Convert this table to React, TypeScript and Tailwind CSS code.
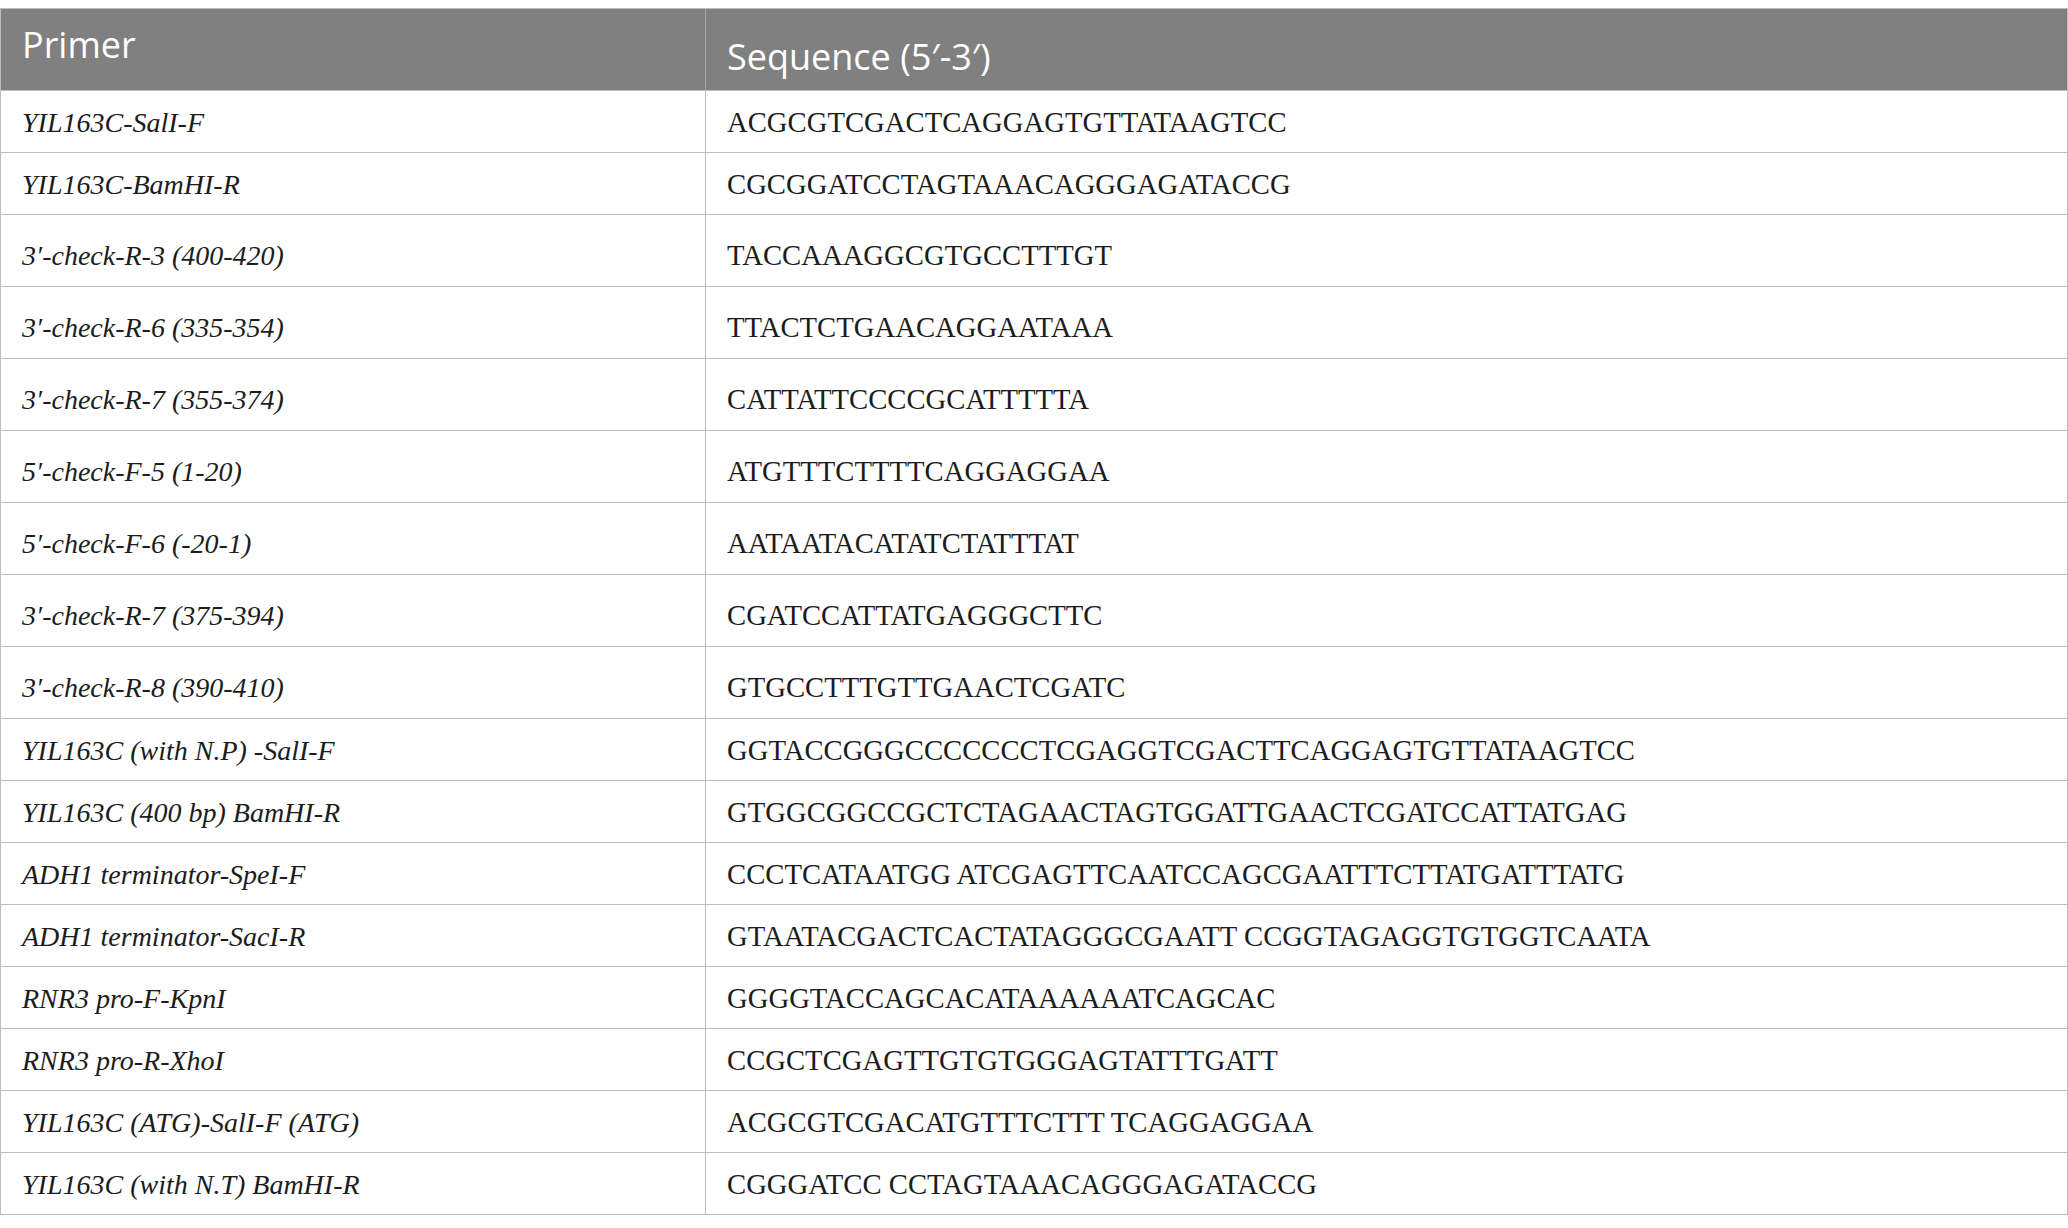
import React from 'react';

// primer list, tall = rows whose label carries a prime mark (they sit taller in the source)
const primers = [
  { name: 'YIL163C-SalI-F', seq: 'ACGCGTCGACTCAGGAGTGTTATAAGTCC' },
  { name: 'YIL163C-BamHI-R', seq: 'CGCGGATCCTAGTAAACAGGGAGATACCG' },
  { name: '3′-check-R-3 (400-420)', seq: 'TACCAAAGGCGTGCCTTTGT', tall: true },
  { name: '3′-check-R-6 (335-354)', seq: 'TTACTCTGAACAGGAATAAA', tall: true },
  { name: '3′-check-R-7 (355-374)', seq: 'CATTATTCCCCGCATTTTTA', tall: true },
  { name: '5′-check-F-5 (1-20)', seq: 'ATGTTTCTTTTCAGGAGGAA', tall: true },
  { name: '5′-check-F-6 (-20-1)', seq: 'AATAATACATATCTATTTAT', tall: true },
  { name: '3′-check-R-7 (375-394)', seq: 'CGATCCATTATGAGGGCTTC', tall: true },
  { name: '3′-check-R-8 (390-410)', seq: 'GTGCCTTTGTTGAACTCGATC', tall: true },
  { name: 'YIL163C (with N.P) -SalI-F', seq: 'GGTACCGGGCCCCCCCTCGAGGTCGACTTCAGGAGTGTTATAAGTCC' },
  { name: 'YIL163C (400 bp) BamHI-R', seq: 'GTGGCGGCCGCTCTAGAACTAGTGGATTGAACTCGATCCATTATGAG' },
  { name: 'ADH1 terminator-SpeI-F', seq: 'CCCTCATAATGG ATCGAGTTCAATCCAGCGAATTTCTTATGATTTATG' },
  { name: 'ADH1 terminator-SacI-R', seq: 'GTAATACGACTCACTATAGGGCGAATT CCGGTAGAGGTGTGGTCAATA' },
  { name: 'RNR3 pro-F-KpnI', seq: 'GGGGTACCAGCACATAAAAAATCAGCAC' },
  { name: 'RNR3 pro-R-XhoI', seq: 'CCGCTCGAGTTGTGTGGGAGTATTTGATT' },
  { name: 'YIL163C (ATG)-SalI-F (ATG)', seq: 'ACGCGTCGACATGTTTCTTT TCAGGAGGAA' },
  { name: 'YIL163C (with N.T) BamHI-R', seq: 'CGGGATCC CCTAGTAAACAGGGAGATACCG' },
];

const App = () => {
  return (
    <div className="min-h-screen bg-white pt-2">
      <div className="border-x border-t border-[#bdbdbd] font-['Liberation_Serif',serif] text-[28px] text-[#1c1c1c]">
        {/* header */}
        <div className="grid h-[81px] grid-cols-[705px_1fr] bg-[#7f807f] font-['Open_Sans',sans-serif] text-[36px] text-white">
          <div className="border-r border-[#a3a4a3] pl-[21px] pt-[11px] leading-[50px]">Primer</div>
          <div className="pl-[21px] pt-[23px] leading-[50px]">Sequence (5′-3′)</div>
        </div>

        {primers.map((p, i) => (
          <div
            key={i}
            className={`grid grid-cols-[705px_1fr] border-t border-[#bdbdbd] ${p.tall ? 'h-[72px]' : 'h-[62px]'}`}
          >
            <div className={`flex items-center border-r border-[#bdbdbd] pl-[21px] italic ${p.tall ? 'pt-[10px]' : 'pt-[2px]'}`}>
              {p.name}
            </div>
            <div className={`flex items-center pl-[21px] text-[28.7px] ${p.tall ? 'pt-[10px]' : 'pt-[2px]'}`}>{p.seq}</div>
          </div>
        ))}
        <div className="border-t border-[#bdbdbd]" />
      </div>
    </div>
  );
};

export default App;
